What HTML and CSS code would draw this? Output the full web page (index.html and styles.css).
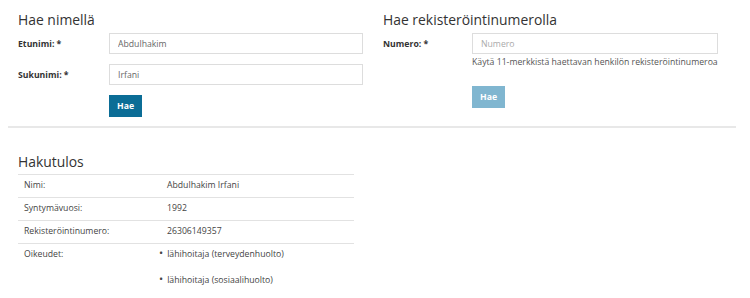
FILE: index.html
```html
<!DOCTYPE html>
<html lang="fi">
<head>
  <meta charset="UTF-8">
  <title>Hae henkilöä</title>
  <link rel="stylesheet" href="styles.css">
</head>
<body>

<div class="page">
  <div class="search-row">
    <section class="search-col">
      <h2>Hae nimellä</h2>
      <div class="form-row">
        <label for="firstName">Etunimi: *</label>
        <input type="text" id="firstName" value="Abdulhakim">
      </div>
      <div class="form-row">
        <label for="lastName">Sukunimi: *</label>
        <input type="text" id="lastName" value="Irfani">
      </div>
      <div class="form-actions">
        <button class="btn">Hae</button>
      </div>
    </section>

    <section class="search-col by-number">
      <h2>Hae rekisteröintinumerolla</h2>
      <div class="form-row">
        <label for="regNumber">Numero: *</label>
        <input type="text" id="regNumber" placeholder="Numero">
      </div>
      <p class="help">Käytä 11-merkkistä haettavan henkilön rekisteröintinumeroa</p>
      <div class="form-actions">
        <button class="btn" disabled>Hae</button>
      </div>
    </section>
  </div>

  <hr class="divider">

  <section class="results">
    <h2>Hakutulos</h2>
    <table class="result-table">
      <tr>
        <td>Nimi:</td>
        <td>Abdulhakim Irfani</td>
      </tr>
      <tr>
        <td>Syntymävuosi:</td>
        <td>1992</td>
      </tr>
      <tr>
        <td>Rekisteröintinumero:</td>
        <td>26306149357</td>
      </tr>
      <tr>
        <td>Oikeudet:</td>
        <td>
          <ul>
            <li>lähihoitaja (terveydenhuolto)</li>
            <li>lähihoitaja (sosiaalihuolto)</li>
          </ul>
        </td>
      </tr>
    </table>
  </section>
</div>

</body>
</html>
```

FILE: styles.css
```css
body {
  margin: 0;
  font-family: 'Open Sans', sans-serif;
  font-size: 8.7px;
  color: #333;
  background: #fff;
}

.page {
  width: 728px;
  margin-left: 8px;
}

.search-row {
  display: flex;
}

.search-col {
  width: 345px;
  padding: 0 10px;
}

h2 {
  font-size: 13.9px;
  font-weight: normal;
  line-height: 17px;
  margin: 11px 0 5px;
}

.form-row {
  display: grid;
  grid-template-columns: 91px 254px;
  align-items: center;
  margin-bottom: 10px;
}

.by-number .form-row {
  grid-template-columns: 89px 246px;
  margin-bottom: 0;
}

label {
  font-weight: bold;
}

input {
  font-family: inherit;
  font-size: 8.7px;
  color: #666;
  height: 21px;
  box-sizing: border-box;
  padding: 0 8px;
  border: 1px solid #ddd;
  border-radius: 0;
  outline: none;
}

input::placeholder {
  color: #aaa;
}

.help {
  line-height: 12px;
  color: #555;
  margin: 2px 0 18px 89px;
}

.form-actions {
  padding-left: 91px;
}

.by-number .form-actions {
  padding-left: 89px;
}

.btn {
  font-family: inherit;
  font-size: 8.7px;
  font-weight: bold;
  color: #fff;
  background: #0b6d96;
  border: none;
  height: 22px;
  padding: 0 8px;
  cursor: pointer;
}

.btn:disabled {
  background: #80b6d0;
  cursor: default;
}

.divider {
  border: none;
  height: 2px;
  background: #e8e8e8;
  margin: 9px 0 0;
}

.results {
  padding-left: 10px;
}

.results h2 {
  margin: 25px 0 4px;
}

.result-table {
  width: 336px;
  border-collapse: collapse;
  color: #444;
}

.result-table td {
  border-top: 1px solid #e2e2e2;
  padding: 4px 6px 5px;
  line-height: 13px;
  vertical-align: top;
}

.result-table td:first-child {
  width: 131px;
}

.result-table ul {
  margin: 0;
  padding: 0;
  list-style: none;
}

.result-table li {
  margin-bottom: 13px;
}

.result-table li:before {
  content: "•";
  font-size: 11px;
  line-height: 1px;
  margin-left: -8px;
  margin-right: 4px;
}
```
